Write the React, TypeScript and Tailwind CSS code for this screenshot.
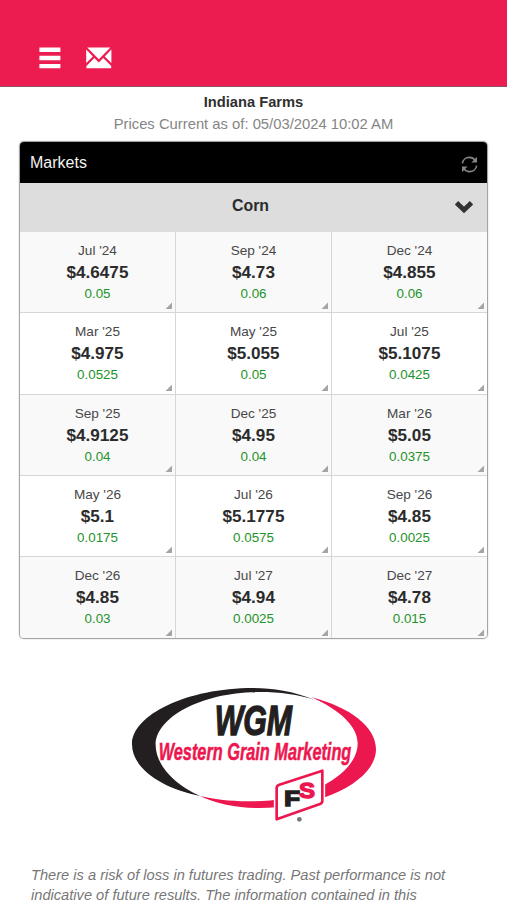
const quotes = [
  ["Jul '24", "$4.6475", "0.05"], ["Sep '24", "$4.73", "0.06"], ["Dec '24", "$4.855", "0.06"],
  ["Mar '25", "$4.975", "0.0525"], ["May '25", "$5.055", "0.05"], ["Jul '25", "$5.1075", "0.0425"],
  ["Sep '25", "$4.9125", "0.04"], ["Dec '25", "$4.95", "0.04"], ["Mar '26", "$5.05", "0.0375"],
  ["May '26", "$5.1", "0.0175"], ["Jul '26", "$5.1775", "0.0575"], ["Sep '26", "$4.85", "0.0025"],
  ["Dec '26", "$4.85", "0.03"], ["Jul '27", "$4.94", "0.0025"], ["Dec '27", "$4.78", "0.015"],
];

function Header() {
  return (
    <header className="flex h-[87px] items-end gap-[25px] border-b border-[#8d5365] bg-[#ed1c50] pb-[17px] pl-[39px]">
      <svg width="22" height="22" viewBox="0 0 22 22" fill="#fff">
        <path d="M.4.6h21v4.5H.4zM.4 8.8h21v4.4H.4zM.4 16.9h21v4.4H.4z" />
      </svg>
      <svg width="26" height="22" viewBox="0 0 26 22" fill="#fff">
        <path d="M1.2.6h23.2L12.8 12.2zM.2 2.6l6.7 6.9-6.7 6.6zM25.4 2.6l-6.7 6.9 6.7 6.6zM8.4 11.1l4.4 4.4 4.4-4.4 8 8v2.2H.4v-2.2z" />
      </svg>
    </header>
  );
}

function Cell({ quote, index }: { quote: string[]; index: number }) {
  const shaded = Math.floor(index / 3) % 2 === 0;
  return (
    <div
      className={`relative flex flex-col items-center pt-[9px] ${shaded ? "bg-[#f9f9f9]" : "bg-white"} ${index % 3 < 2 ? "border-r border-[#d6d6d6]" : ""} ${index < 12 ? "border-b border-b-[#d6d6d6]" : ""}`}
    >
      <span className="text-[13.6px] leading-[19px] text-[#484848]">{quote[0]}</span>
      <span className="mt-px text-[17.1px] leading-[24px] font-bold text-[#2b2b2b]">{quote[1]}</span>
      <span className="-mt-px text-[13.4px] leading-[19px] text-[#1f932b]">{quote[2]}</span>
      <svg className="absolute right-[3px] bottom-[3px]" width="7" height="7" viewBox="0 0 7 7">
        <path d="M7 .5V7H.5z" fill="#a5a5a5" />
      </svg>
    </div>
  );
}

function Logo() {
  return (
    <svg className="ml-[120px] block" width="270" height="150" viewBox="0 0 810 450" fontFamily="Liberation Sans, Arial, sans-serif" fontWeight="700">
      <path fill="#231f20" d="M585 60C520 33 455 24 400 24C200 24 36 105 36 193C36 265 125 325 240 348C155 310 107 250 107 195C107 110 250 36 420 36C480 36 535 44 585 60Z" />
      <path fill="#ed174f" d="M575 52C690 82 768 140 768 208C768 300 610 384 415 384C350 384 290 372 240 348C300 362 350 364 400 364C570 364 713 280 713 190C713 140 660 90 575 52Z" />
      <path fill="#fff" stroke="#fff" strokeWidth="17" strokeLinejoin="round" d="M470 318L607 272V371L470 420Z" />
      <path fill="#fff" stroke="#ed174f" strokeWidth="8" strokeLinejoin="round" d="M478 314Q470 317 470 324V418L600 372Q607 369 607 362V272Z" />
      <text x="284" y="164" fontSize="126" fontStyle="italic" fill="#231f20" stroke="#231f20" strokeWidth="4" textLength="232" lengthAdjust="spacingAndGlyphs">WGM</text>
      <text x="116" y="240" fontSize="71" fontStyle="italic" fill="#ed174f" stroke="#ed174f" strokeWidth="1.5" textLength="578" lengthAdjust="spacingAndGlyphs">Western Grain Marketing</text>
      <text x="493" y="379" fontSize="66" fill="#231f20" stroke="#231f20" strokeWidth="5" textLength="47" lengthAdjust="spacingAndGlyphs">F</text>
      <text x="537" y="355" fontSize="64" fill="#ed174f" stroke="#ed174f" strokeWidth="4" textLength="48" lengthAdjust="spacingAndGlyphs">S</text>
      <circle cx="538" cy="418" r="7" fill="#77777a" />
    </svg>
  );
}

export default function App() {
  return (
    <main className="h-[900px] w-[507px] overflow-hidden bg-white font-['Liberation_Sans',Arial,sans-serif]">
      <Header />
      <div className="flex h-[54px] flex-col items-center pt-[4px]">
        <h1 className="text-[14.7px] leading-[22px] font-bold text-[#2f2f2f]">Indiana Farms</h1>
        <p className="text-[14.8px] leading-[22px] text-[#858585]">Prices Current as of: 05/03/2024 10:02 AM</p>
      </div>
      <section className="mx-auto h-[498px] w-[469px] overflow-hidden rounded-[5px] border border-[#a5a5a5] shadow-[0_0_1px_#777]">
        <div className="flex h-[41px] items-center justify-between bg-black pr-[9px] pl-[10px] text-[16px] text-[#f2f2f2]">
          <span>Markets</span>
          <svg className="mt-[3px]" width="17" height="17" viewBox="0 0 17 17" fill="none" stroke="#858585" strokeWidth="1.6">
            <path d="M1.4 7.4C1.8 3.8 4.8 1.4 8.4 1.4c2.4 0 4.5 1.1 5.8 3M15.6 9.6c-.4 3.6-3.4 6-7 6-2.4 0-4.5-1.1-5.8-3" />
            <path d="M16 .8v5.6h-5.6zM1 16.2v-5.6h5.6z" fill="#858585" stroke="none" />
          </svg>
        </div>
        <div className="relative flex h-[49px] items-center justify-center bg-[#ddd] pr-[6px] pb-[3px] text-[15.9px] font-bold text-[#2b2b2b]">
          Corn
          <svg className="absolute top-[17px] right-[13px]" width="20" height="14" viewBox="0 0 20 14" fill="none" stroke="#333" strokeWidth="4.8">
            <path d="M2.5 2.7L10 10l7.5-7.3" />
          </svg>
        </div>
        <div className="grid h-[406.5px] grid-cols-[156px_156px_155px] grid-rows-5">
          {quotes.map((quote, i) => <Cell key={i} quote={quote} index={i} />)}
        </div>
      </section>
      <div className="pt-[41px]"><Logo /></div>
      <p className="mt-[35px] ml-[31px] w-[430px] text-[14.65px] leading-[20px] whitespace-nowrap text-[#777] italic">
        There is a risk of loss in futures trading. Past performance is not<br />
        indicative of future results. The information contained in this
      </p>
    </main>
  );
}
